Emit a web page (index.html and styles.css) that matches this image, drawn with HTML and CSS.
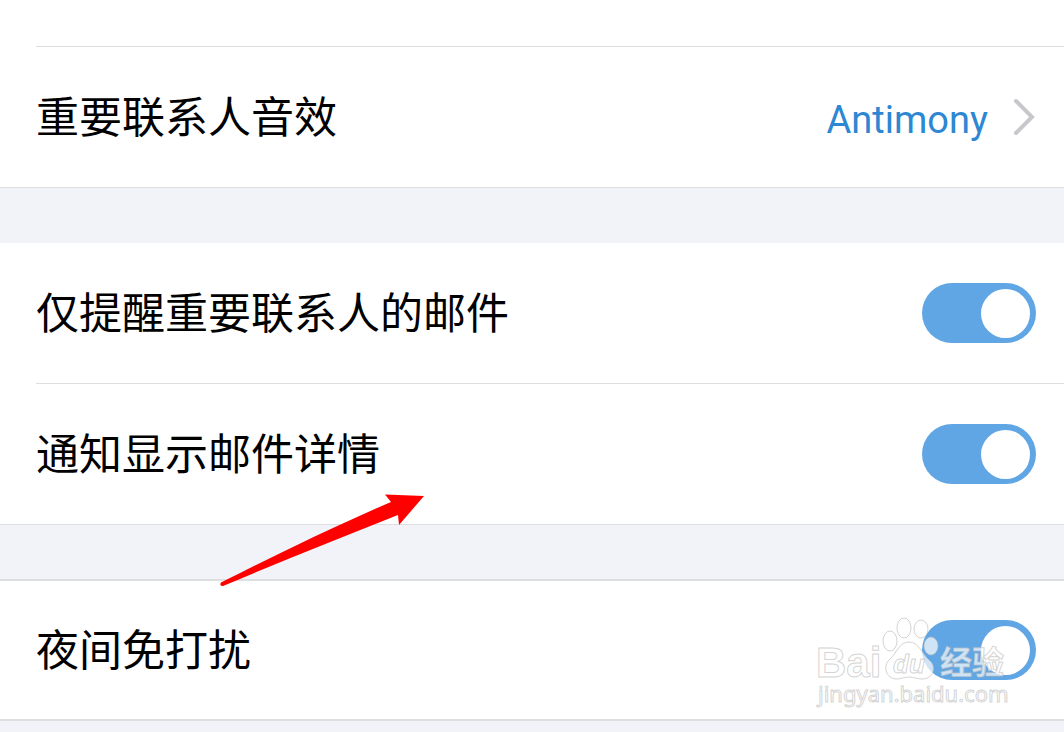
FILE: index.html
```
<!DOCTYPE html>
<html lang="zh-CN">
<head>
<meta charset="utf-8">
<meta name="viewport" content="width=device-width, initial-scale=1">
<title>通知设置</title>
<link rel="stylesheet" href="styles.css">
</head>
<body>
<main class="settings">
  <section class="group group-first">
    <button class="row row-inset" type="button">
      <span class="label">重要联系人音效</span>
      <span class="value">Antimony</span>
      <svg class="chevron" viewBox="0 0 24 40" aria-hidden="true"><path d="M4 4 20 20 4 36"/></svg>
    </button>
  </section>
  <section class="group">
    <label class="row">
      <span class="label">仅提醒重要联系人的邮件</span>
      <input class="switch" type="checkbox" role="switch" checked>
    </label>
    <label class="row row-inset">
      <span class="label">通知显示邮件详情</span>
      <input class="switch" type="checkbox" role="switch" checked>
    </label>
  </section>
  <section class="group group-ruled">
    <label class="row row-short">
      <span class="label">夜间免打扰</span>
      <input class="switch" type="checkbox" role="switch" checked>
    </label>
  </section>
</main>
<svg class="arrow" viewBox="0 0 206 94" aria-hidden="true"><path d="M1 89.500C50 65 110 35 171 9L165 1.500 204 3 179 32 178 22C120 45 60 69 3 93Q-1 93 1 89.500Z"/></svg>
<svg class="watermark" viewBox="0 0 200 100" aria-hidden="true">
  <g class="mark">
    <text class="mark-bai" x="1" y="62">Bai</text>
    <ellipse cx="88" cy="13" rx="7" ry="10" transform="translate(-13 13)"/>
    <ellipse cx="89" cy="13" rx="7" ry="10"/>
    <ellipse cx="106" cy="14" rx="7" ry="9"/>
    <ellipse cx="116" cy="31" rx="7" ry="9"/>
    <path d="M94 27C84 27 82 38 75 44C67 51 71 64 82 64C87 64 89 62 94 62S102 64 107 64C119 64 122 51 114 45C107 39 104 27 94 27Z"/>
    <text class="mark-du" x="78" y="58">du</text>
    <text class="mark-cn" x="125" y="59">经验</text>
    <text class="mark-url" x="3" y="87">jingyan.baidu.com</text>
  </g>
</svg>
</body>
</html>
```
FILE: styles.css
```
* {
  box-sizing: border-box;
}

body {
  position: relative;
  margin: 0;
  min-height: 100vh;
  overflow: hidden;
  background: #f2f3f8;
  color: #000;
  font-family: "Noto Sans CJK SC", sans-serif;
}

.settings {
  display: flex;
  flex-direction: column;
}

.group {
  margin-bottom: 55px;
  background: #fff;
  border-bottom: 1px solid #dedede;
}

.group:has(+ .group-ruled) {
  margin-bottom: 54px;
}

.group-first {
  padding-top: 46px;
}

.group-ruled {
  margin-bottom: 0;
  border-top: 2px solid #dedede;
  border-bottom-width: 2px;
}

.row {
  display: flex;
  align-items: center;
  width: 100%;
  min-height: 140px;
  padding: 30px 28px 30px 36px;
  border: 0;
  background: none;
  color: inherit;
  font: inherit;
  text-align: left;
}

.row-short {
  min-height: 138px;
}

.row-inset {
  min-height: 141px;
  padding-top: 31px;
  background: linear-gradient(#dedede, #dedede) 36px 0 / 100% 1px no-repeat;
}

.label {
  flex: 1;
  padding-bottom: 6px;
  font-size: 43px;
  line-height: 60px;
}

.value {
  margin-right: 24px;
  padding-top: 6px;
  color: #2d87d3;
  font-family: Roboto, sans-serif;
  font-size: 38px;
  line-height: 60px;
}

.chevron {
  width: 24px;
  height: 40px;
  fill: none;
  stroke: #c7c7cc;
  stroke-width: 4;
  stroke-linecap: round;
}

.switch {
  appearance: none;
  display: flex;
  justify-content: flex-end;
  align-items: center;
  width: 114px;
  height: 60px;
  margin: 0;
  padding-right: 6px;
  border-radius: 30px;
  background: #60a6e5;
}

.switch::before {
  content: "";
  width: 49px;
  height: 49px;
  border-radius: 50%;
  background: #fff;
}

.switch:not(:checked) {
  justify-content: flex-start;
  padding-left: 6px;
  background: #d5d7dc;
}

.arrow {
  position: absolute;
  top: 493px;
  left: 220px;
  width: 206px;
  height: 94px;
  fill: #f00;
  pointer-events: none;
}

.watermark {
  position: absolute;
  top: 615px;
  right: 49px;
  width: 200px;
  height: 100px;
  pointer-events: none;
}

.mark {
  fill: #fff;
  fill-opacity: 0.7;
  stroke: #bbb;
  stroke-opacity: 0.65;
  stroke-width: 1;
}

.mark-bai {
  font: bold 42px "Liberation Sans", sans-serif;
}

.mark-du {
  font: italic bold 26px "Liberation Sans", sans-serif;
}

.mark-cn {
  font: bold 32px "Noto Sans CJK SC", sans-serif;
}

.mark-url {
  font: 22px "Noto Sans", sans-serif;
}
```
